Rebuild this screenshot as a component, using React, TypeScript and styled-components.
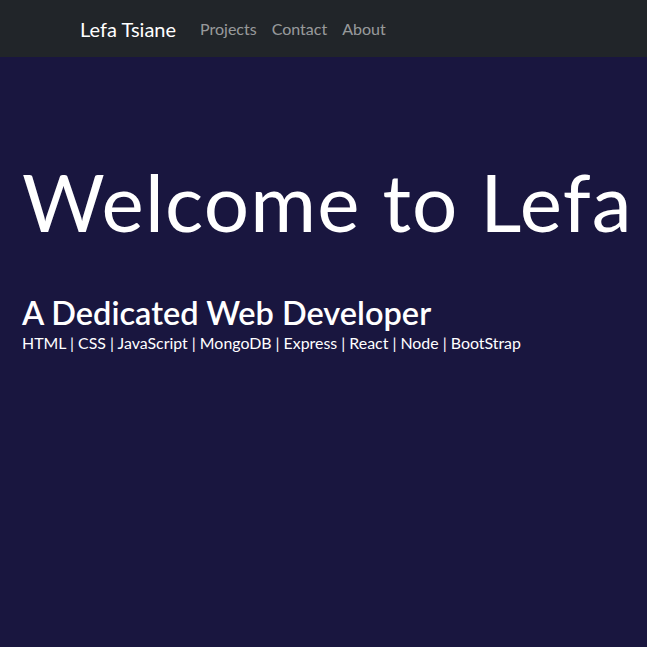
import styled, { createGlobalStyle } from "styled-components";

const GlobalStyle = createGlobalStyle`
  html, body {
    margin: 0;
    padding: 0;
    background-color: #19163f;
    font-family: "Segoe UI", Lato, "Noto Sans", sans-serif;
    color: #fff;
  }
  * {
    box-sizing: border-box;
  }
`;

const Page = styled.div`
  min-height: 647px;
  background-color: #19163f;
  overflow: hidden;
`;

const Navbar = styled.nav`
  height: 57px;
  background-color: #212529;
  display: flex;
  align-items: center;
  padding-left: 80px;
`;

const Brand = styled.a`
  font-size: 20px;
  color: #fff;
  text-decoration: none;
  margin-right: 24px;
`;

const NavLinks = styled.div`
  display: flex;
  gap: 15px;
`;

const NavLink = styled.a`
  font-size: 16px;
  color: rgba(255, 255, 255, 0.55);
  text-decoration: none;
`;

const Hero = styled.header`
  padding: 96px 22px 0;
`;

const Title = styled.h1`
  margin: 0;
  font-size: 80px;
  font-weight: 400;
  letter-spacing: 1.2px;
  line-height: 1.2;
  white-space: nowrap;
`;

const Subtitle = styled.h2`
  margin: 44px 0 0;
  font-size: 32.5px;
  font-weight: 600;
  line-height: 1.2;
`;

const Skills = styled.p`
  margin: 0;
  font-size: 15.9px;
  line-height: 1.4;
`;

const skills = ["HTML", "CSS", "JavaScript", "MongoDB", "Express", "React", "Node", "BootStrap"];

export default function App() {
  return (
    <Page>
      <GlobalStyle />
      <Navbar>
        <Brand href="#">Lefa Tsiane</Brand>
        <NavLinks>
          <NavLink href="#">Projects</NavLink>
          <NavLink href="#">Contact</NavLink>
          <NavLink href="#">About</NavLink>
        </NavLinks>
      </Navbar>
      <Hero>
        <Title>Welcome to Lefa</Title>
        <Subtitle>A Dedicated Web Developer</Subtitle>
        <Skills>{skills.join(" | ")}</Skills>
      </Hero>
    </Page>
  );
}
